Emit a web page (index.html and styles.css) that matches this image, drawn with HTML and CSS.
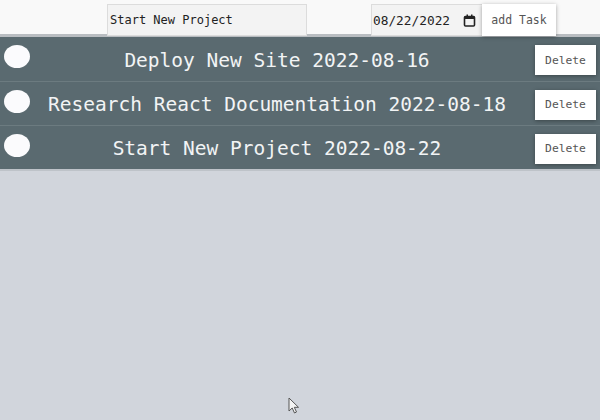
FILE: index.html
```html
<!DOCTYPE html>
<html>
<head>
<meta charset="utf-8">
<link rel="stylesheet" href="styles.css">
</head>
<body>
<header class="bar">
  <input class="text-input" type="text" value="Start New Project">
  <div class="date-input">
    <span class="date-text">08/22/2022</span>
    <svg class="cal" width="13" height="13" viewBox="0 0 13 13"><rect x="1.5" y="2.5" width="10" height="9.5" rx="1" fill="none" stroke="#222" stroke-width="1.6"/><rect x="1.5" y="2.5" width="10" height="2.5" fill="#222"/><rect x="3.5" y="0.5" width="1.5" height="2.5" fill="#222"/><rect x="8" y="0.5" width="1.5" height="2.5" fill="#222"/></svg>
  </div>
  <button class="add-btn">add Task</button>
</header>
<ul class="tasks">
  <li class="task"><span class="dot"></span><span class="title">Deploy New Site 2022-08-16</span><button class="del">Delete</button></li>
  <li class="task"><span class="dot"></span><span class="title">Research React Documentation 2022-08-18</span><button class="del">Delete</button></li>
  <li class="task"><span class="dot"></span><span class="title">Start New Project 2022-08-22</span><button class="del">Delete</button></li>
</ul>
<svg class="cursor" width="12" height="18" viewBox="0 0 12 18"><path d="M1 1 L1 14 L4.2 11 L6.5 16 L8.5 15 L6.3 10.3 L10.5 10.3 Z" fill="#f4f4f4" stroke="#555" stroke-width="1"/></svg>
</body>
</html>
```
FILE: styles.css
```css
html, body {
  margin: 0;
  padding: 0;
}
body {
  width: 600px;
  height: 420px;
  background: #d1d5dc;
  font-family: "DejaVu Sans Mono", "Liberation Mono", monospace;
  position: relative;
  overflow: hidden;
}
.bar {
  display: flex;
  align-items: flex-start;
  height: 37px;
  padding: 4px 0 0 107px;
  box-sizing: border-box;
  background: #f9f9f9;
  border-bottom: 3px solid #b9bdc1;
}
.text-input {
  width: 200px;
  height: 32px;
  box-sizing: border-box;
  border: 1px solid #dcdcdc;
  background: #f3f3f3;
  font-family: inherit;
  font-size: 12px;
  color: #222;
  padding: 0 2px;
  outline: none;
}
.date-input {
  margin-left: 64px;
  width: 111px;
  height: 32px;
  box-sizing: border-box;
  border: 1px solid #dcdcdc;
  border-right: none;
  background: #f3f3f3;
  display: flex;
  align-items: center;
  padding-left: 1px;
}
.date-text {
  font-size: 12.8px;
  color: #222;
}
.cal {
  margin-left: 13px;
}
.add-btn {
  width: 74px;
  height: 32px;
  border: none;
  background: #fff;
  box-shadow: 0 1px 4px rgba(0,0,0,0.35);
  font-family: inherit;
  font-size: 11.5px;
  color: #555;
  padding: 0;
}
.tasks {
  list-style: none;
  margin: 0;
  padding: 0;
  border-bottom: 2px solid #bec3c9;
}
.task {
  display: flex;
  align-items: center;
  height: 44px;
  box-sizing: border-box;
  background: #5a6a70;
  border-top: 1px solid #6c7b80;
}
.task:first-child {
  border-top: none;
}
.dot {
  width: 26px;
  height: 23px;
  border-radius: 50%;
  background: #fbfbfd;
  margin-left: 4px;
  margin-top: -5px;
  flex: none;
}
.title {
  flex: 1;
  text-align: center;
  color: #f2f4f5;
  font-size: 19.5px;
  padding: 2px 11px 0 0;
  white-space: nowrap;
}
.del {
  width: 61px;
  height: 30px;
  margin: 2px 4px 0 0;
  border: none;
  background: #fff;
  box-shadow: 0 1px 4px rgba(0,0,0,0.35);
  font-family: inherit;
  font-size: 11.3px;
  color: #555;
  padding: 0;
  flex: none;
}
.cursor {
  position: absolute;
  left: 288px;
  top: 397px;
}
```
